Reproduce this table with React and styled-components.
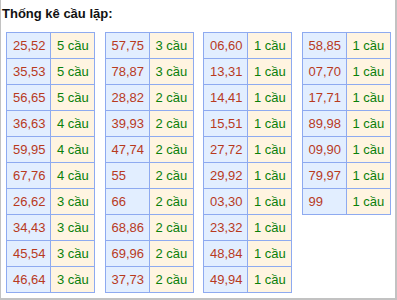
import React from 'react'
import styled, { createGlobalStyle } from 'styled-components'

const GlobalStyle = createGlobalStyle`
    body {
        margin: 0;
        background: #fff;
        font-family: Arial, "Liberation Sans", sans-serif;
    }
`

const StyledFrame = styled.div`
    box-sizing: border-box;
    width: 397px;
    height: 300px;
    border-left: 1px solid #c2c2c2;
    border-right: 2px solid #c2c2c2;
    border-bottom: 2px solid #c2c2c2;
    background: #fff;
`

const StyledTitle = styled.div`
    padding: 6px 0 0 1px;
    height: 16px;
    line-height: 16px;
    font-size: 13px;
    font-weight: 700;
    color: #111;
`

const StyledGrid = styled.div`
    display: grid;
    grid-template-columns: repeat(4, 1fr);
    margin-top: 10px;
`

const StyledCol = styled.div`
    padding-left: 5px;
`

const StyledTable = styled.table`
    border-collapse: collapse;
    table-layout: fixed;
    width: 89px;
`

const StyledCell = styled.td`
    width: 50%;
    height: 25px;
    padding: 0 0 0 6px;
    border: 1px solid #8eaaf0;
    font-size: 13px;
    line-height: 15px;
    white-space: nowrap;
    vertical-align: middle;
    background: ${(p) => (p.$count ? '#fff4e1' : '#e2eeff')};
    color: ${(p) => (p.$count ? '#0a800a' : '#b83a1e')};
`

const tables = [
    [['25,52', 5], ['35,53', 5], ['56,65', 5], ['36,63', 4], ['59,95', 4], ['67,76', 4], ['26,62', 3], ['34,43', 3], ['45,54', 3], ['46,64', 3]],
    [['57,75', 3], ['78,87', 3], ['28,82', 2], ['39,93', 2], ['47,74', 2], ['55', 2], ['66', 2], ['68,86', 2], ['69,96', 2], ['37,73', 2]],
    [['06,60', 1], ['13,31', 1], ['14,41', 1], ['15,51', 1], ['27,72', 1], ['29,92', 1], ['03,30', 1], ['23,32', 1], ['48,84', 1], ['49,94', 1]],
    [['58,85', 1], ['07,70', 1], ['17,71', 1], ['89,98', 1], ['09,90', 1], ['79,97', 1], ['99', 1]],
]

const App = () => {
    return (
        <StyledFrame>
            <GlobalStyle />
            <StyledTitle>Thống kê cầu lặp:</StyledTitle>
            <StyledGrid>
                {tables.map((rows, i) => (
                    <StyledCol key={i}>
                        <StyledTable>
                            <tbody>
                                {rows.map(([pair, n]) => (
                                    <tr key={pair}>
                                        <StyledCell>{pair}</StyledCell>
                                        <StyledCell $count>{n} cầu</StyledCell>
                                    </tr>
                                ))}
                            </tbody>
                        </StyledTable>
                    </StyledCol>
                ))}
            </StyledGrid>
        </StyledFrame>
    )
}

export default App
